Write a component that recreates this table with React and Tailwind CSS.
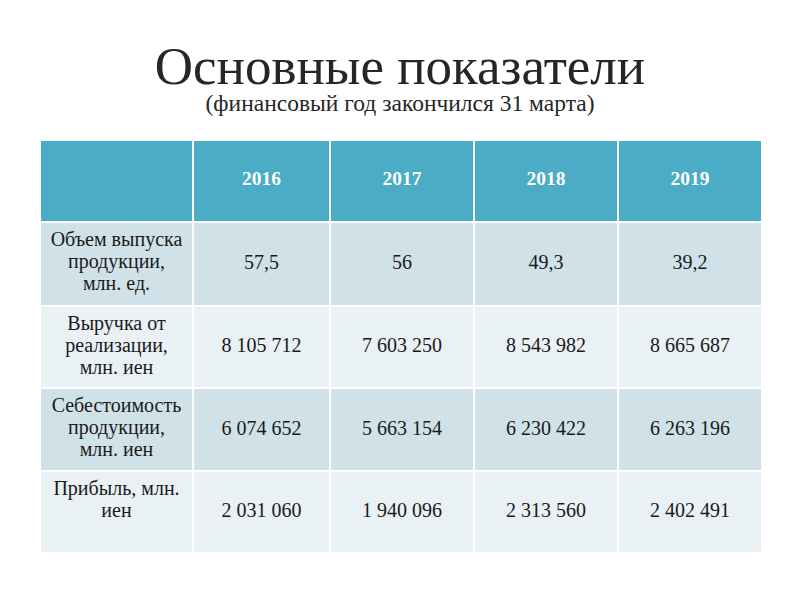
export default function App() {
  const years = ["2016", "2017", "2018", "2019"];
  const rows = [
    { label: ["Объем выпуска", "продукции,", "млн. ед."], vals: ["57,5", "56", "49,3", "39,2"], dark: true, h: "h-[82px]" },
    { label: ["Выручка от", "реализации,", "млн. иен"], vals: ["8 105 712", "7 603 250", "8 543 982", "8 665 687"], dark: false, h: "h-[80px]" },
    { label: ["Себестоимость", "продукции,", "млн. иен"], vals: ["6 074 652", "5 663 154", "6 230 422", "6 263 196"], dark: true, h: "h-[81px]" },
    { label: ["Прибыль, млн.", "иен"], vals: ["2 031 060", "1 940 096", "2 313 560", "2 402 491"], dark: false, h: "h-[80px]" },
  ];
  return (
    <div className="w-[800px] h-[600px] bg-white flex flex-col items-center" style={{ fontFamily: '"Liberation Serif", "Times New Roman", serif' }}>
      <h1 className="mt-[41px] text-[53px] leading-[50px] text-[#262626]">Основные показатели</h1>
      <p className="mt-[2px] text-[23.5px] leading-[20px] text-[#262626]">(финансовый год закончился 31 марта)</p>
      <div className="mt-[28px] grid grid-cols-[151px_135px_142px_142px_142px] gap-[2px] bg-white ml-[2px]">
        <div className="h-[80px] bg-[#4bacc6]" />
        {years.map((y) => (
          <div key={y} className="h-[80px] bg-[#4bacc6] flex items-center justify-center pb-[4px] text-white font-bold text-[19.5px]">
            {y}
          </div>
        ))}
        {rows.map((r, i) => (
          <>
            <div key={"l" + i} className={`${r.h} ${r.dark ? "bg-[#d0e2e8]" : "bg-[#e9f1f4]"} flex flex-col items-center pt-[5px] text-[20px] leading-[22px] text-[#1a1a1a]`}>
              {r.label.map((t) => (
                <span key={t}>{t}</span>
              ))}
            </div>
            {r.vals.map((v, j) => (
              <div key={i + "-" + j} className={`${r.h} ${r.dark ? "bg-[#d0e2e8]" : "bg-[#e9f1f4]"} flex items-center justify-center pb-[4px] text-[20px] text-[#1a1a1a]`}>
                {v}
              </div>
            ))}
          </>
        ))}
      </div>
    </div>
  );
}
